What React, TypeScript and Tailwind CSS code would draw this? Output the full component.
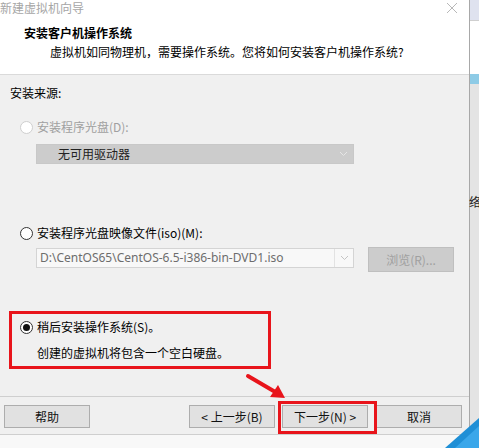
const font = { fontFamily: '"Noto Sans CJK SC", "Liberation Sans", sans-serif' };

function Radio({ checked = false, disabled = false }: { checked?: boolean; disabled?: boolean }) {
  return (
    <span
      className={`flex h-[13px] w-[13px] shrink-0 items-center justify-center rounded-full border bg-white ${
        disabled ? 'border-[#cfcfcf]' : 'border-[#333]'
      }`}
    >
      {checked && <span className="h-[7px] w-[7px] rounded-full bg-[#111]" />}
    </span>
  );
}

function Chevron({ color }: { color: string }) {
  return (
    <svg width="9" height="6" viewBox="0 0 9 6" fill="none">
      <path d="M1 1 L4.5 4.5 L8 1" stroke={color} strokeWidth="1" />
    </svg>
  );
}

function Button({ children, className = '' }: { children: React.ReactNode; className?: string }) {
  return (
    <div
      className={`flex h-[23px] w-[86px] items-center justify-center border border-[#adadad] bg-[#e1e1e1] text-[12px] text-[#111] ${className}`}
    >
      {children}
    </div>
  );
}

export default function App() {
  return (
    <div className="relative flex h-[448px] w-[479px] overflow-hidden bg-white" style={font}>
      {/* dialog */}
      <div className="flex h-full w-[470px] shrink-0 flex-col border-r border-[#a8a8a8]">
        <div className="flex h-[16px] items-center justify-between bg-white">
          <span className="text-[12px] leading-[16px] text-[#a6a6a6]">新建虚拟机向导</span>
          <svg width="12" height="12" viewBox="0 0 12 12" className="mr-[11px]">
            <path d="M1 1 L11 11 M11 1 L1 11" stroke="#b8b8b8" strokeWidth="1" />
          </svg>
        </div>

        <div className="h-[59px] border-b border-[#dadada] bg-white pl-[24px] pt-[9px] text-[12px] leading-[16px] text-black">
          <div className="font-bold">安装客户机操作系统</div>
          <div className="mt-[3px] pl-[26px]">虚拟机如同物理机，需要操作系统。您将如何安装客户机操作系统?</div>
        </div>

        <div className="flex h-[321px] flex-col bg-[#f0f0f0] pl-[10px] text-[12px] leading-[16px] text-black">
          <div className="mt-[10px]">安装来源:</div>

          <div className="mt-[18px] flex items-center gap-[4px] pl-[10px] text-[#a0a0a0]">
            <Radio disabled />
            <span>安装程序光盘(D):</span>
          </div>
          <div className="ml-[26px] mt-[9px] flex h-[20px] w-[318px] items-center justify-between border border-[#c8c8c8] bg-[#cccccc] pl-[21px] pr-[5px]">
            <span className="text-[#222]">无可用驱动器</span>
            <Chevron color="#e6e6e6" />
          </div>

          <div className="mt-[61px] flex items-center gap-[4px] pl-[10px]">
            <Radio />
            <span>安装程序光盘映像文件(iso)(M):</span>
          </div>
          <div className="mt-[6px] flex items-start">
            <div className="ml-[26px] mt-[1px] flex h-[20px] w-[318px] items-center border border-[#d4d4d4] bg-[#f8f8f8]">
              <span className="flex-1 pl-[3px] text-[#6d6d6d]" style={{ fontFamily: '"Noto Sans", "Noto Sans CJK SC", sans-serif' }}>
                D:\CentOS65\CentOS-6.5-i386-bin-DVD1.iso
              </span>
              <span className="flex h-full w-[19px] items-center justify-center border-l border-[#e2e2e2]">
                <Chevron color="#c4c4c4" />
              </span>
            </div>
            <div className="ml-[14px] flex h-[25px] w-[86px] items-center justify-center border border-[#bfbfbf] bg-[#cccccc] text-[#a0a0a0]">
              浏览(R)...
            </div>
          </div>

          <div className="-ml-[1px] mt-[39px] h-[58px] w-[262px] border-[3px] border-[#e8141b] pl-[8px] pt-[5px]">
            <div className="flex items-center gap-[4px]">
              <Radio checked />
              <span>稍后安装操作系统(S)。</span>
            </div>
            <div className="mt-[10px] pl-[17px]">创建的虚拟机将包含一个空白硬盘。</div>
          </div>
        </div>

        <div className="flex h-[39px] items-start border-y border-[#cfcfcf] bg-[#f0f0f0] pt-[8px]">
          <Button className="ml-[4px]">帮助</Button>
          <Button className="ml-[99px]">&lt; 上一步(B)</Button>
          <Button className="ml-[7px]">下一步(N) &gt;</Button>
          <Button className="ml-[8px]">取消</Button>
        </div>
        <div className="flex-1 bg-[#f8f8f8]" />
      </div>

      {/* background window on the right */}
      <div className="flex h-full flex-1 flex-col bg-[#e4e4e4] text-[12px]">
        <div className="h-[20px] bg-[#dfe2ef]" />
        <div className="h-[54px] border-t border-[#cfcfcf] bg-white" />
        <div className="h-[10px] bg-[#8ecbe6]" />
        <div className="mt-[110px] -ml-[1px] leading-[16px] text-[#222]">络</div>
      </div>

      {/* annotations */}
      <div className="absolute left-[278px] top-[401px] h-[33px] w-[99px] border-[3px] border-[#e8141b]" />
      <svg className="absolute left-[240px] top-[366px]" width="50" height="38" viewBox="0 0 50 38">
        <path d="M8 10 L37 27" stroke="#e8141b" strokeWidth="4" strokeLinecap="round" />
        <path d="M45 32 L30 31 L38 19 Z" fill="#e8141b" />
      </svg>
      <svg className="absolute bottom-0 right-0" width="34" height="30" viewBox="0 0 34 30">
        <path d="M34 0 L34 30 L0 30 Z" fill="#1f8fd6" />
        <path d="M34 8 L34 30 L10 30 Z" fill="#3aa7ea" />
      </svg>
    </div>
  );
}
